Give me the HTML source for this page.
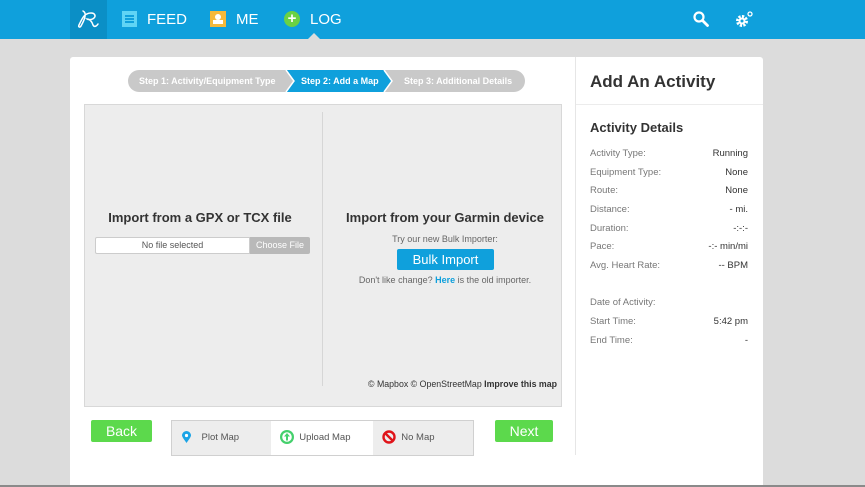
<!DOCTYPE html>
<html><head><meta charset="utf-8"><style>
*{margin:0;padding:0;box-sizing:border-box}
body{width:865px;height:487px;overflow:hidden;background:#dcdcdc;font-family:"Liberation Sans",sans-serif;position:relative}
.hdr{position:absolute;left:0;top:0;width:865px;height:39px;background:#0fa0dc}
.logo{position:absolute;left:70px;top:0;width:37px;height:39px;background:#0b8fc6}
.nav{position:absolute;top:11px;color:#fff;font-size:15px;line-height:18px}
.abs{position:absolute}
.panel{position:absolute;left:70px;top:57px;width:693px;height:428px;background:#fff;border-radius:3px 3px 0 0}
.map{position:absolute;left:84px;top:104px;width:478px;height:303px;background:#ededed;border:1px solid #d8d8d8}
.h{font-weight:bold;color:#333;font-size:13px;position:absolute;text-align:center}
.row{position:absolute;left:590px;width:158px;font-size:9.5px;color:#777}
.row span{position:absolute;right:0;color:#333}
.btn{position:absolute;background:#5cd94c;color:#fff;font-size:14px;text-align:center;border-radius:2px;line-height:22px}
.seg{position:absolute;top:420px;height:36px;font-size:9.5px;color:#555;line-height:36px}
</style></head><body>
<div class="hdr"></div>
<div class="logo"><svg width="37" height="39" viewBox="0 0 37 39"><path d="M13 11c4 2 2 8-2 15-1 2-3 1-2-1 3-6 5-12 12-12 4 0 5 3 3 5-2 2-6 2-7 1 3 0 5 3 6 6 1 2 3 2 5-1" fill="none" stroke="#fff" stroke-width="1.5" stroke-linecap="round"/></svg></div>
<div class="abs" style="left:122px;top:11px;width:15px;height:16px;background:#5fd4f5"></div>
<div class="abs" style="left:125px;top:15px;width:9px;height:1.5px;background:#0fa0dc;box-shadow:0 3px 0 #0fa0dc,0 6px 0 #0fa0dc"></div>
<div class="nav" style="left:147px">FEED</div>
<div class="abs" style="left:210px;top:11px;width:16px;height:16px;background:#f5b93a"></div>
<div class="abs" style="left:215px;top:14px;width:6px;height:6px;background:#fff;border-radius:3px"></div>
<div class="abs" style="left:213px;top:20px;width:10px;height:4px;background:#fff"></div>
<div class="nav" style="left:236px">ME</div>
<div class="abs" style="left:284px;top:11px;width:16px;height:16px;background:#6ad144;border-radius:50%;color:#fff;font-size:15px;line-height:16px;text-align:center;font-weight:bold">+</div>
<div class="nav" style="left:310px">LOG</div>
<div class="abs" style="left:308px;top:33px;width:0;height:0;border-left:6px solid transparent;border-right:6px solid transparent;border-bottom:6px solid #dcdcdc"></div>
<svg class="abs" style="left:692px;top:10px" width="18" height="18" viewBox="0 0 18 18"><circle cx="7" cy="7" r="4.5" fill="none" stroke="#fff" stroke-width="2.2"/><path d="M10.5 10.5l5 5" stroke="#fff" stroke-width="2.8" stroke-linecap="round"/></svg>
<svg class="abs" style="left:735px;top:10px" width="20" height="20" viewBox="0 0 20 20"><circle cx="7" cy="11" r="4.5" fill="none" stroke="#fff" stroke-width="3" stroke-dasharray="2.2 1.3"/><circle cx="7" cy="11" r="3.5" fill="#fff"/><circle cx="7" cy="11" r="1.5" fill="#0fa0dc"/><circle cx="15" cy="4" r="2" fill="none" stroke="#fff" stroke-width="1.3"/></svg>

<div class="panel"></div>
<div class="abs" style="left:575px;top:57px;width:1px;height:398px;background:#e6e6e6"></div>
<div class="abs" style="left:576px;top:104px;width:187px;height:1px;background:#ececec"></div>
<div class="abs" style="left:590px;top:72px;font-size:17px;font-weight:bold;color:#333">Add An Activity</div>
<div class="abs" style="left:590px;top:120px;font-size:13px;font-weight:bold;color:#333">Activity Details</div>
<div class="row" style="top:148px">Activity Type:<span>Running</span></div>
<div class="row" style="top:167px">Equipment Type:<span>None</span></div>
<div class="row" style="top:185px">Route:<span>None</span></div>
<div class="row" style="top:204px">Distance:<span>- mi.</span></div>
<div class="row" style="top:223px">Duration:<span>-:-:-</span></div>
<div class="row" style="top:241px">Pace:<span>-:- min/mi</span></div>
<div class="row" style="top:260px">Avg. Heart Rate:<span>-- BPM</span></div>
<div class="row" style="top:297px">Date of Activity:</div>
<div class="row" style="top:316px">Start Time:<span>5:42 pm</span></div>
<div class="row" style="top:335px">End Time:<span>-</span></div>

<svg class="abs" style="left:128px;top:70px" width="397" height="22" viewBox="0 0 397 22"><rect x="0" y="0" width="397" height="22" rx="11" fill="#c9c9c9"/><path d="M158 0h98l8 11-8 11h-98l8-11z" fill="#0fa0dc"/><path d="M158 0l8 11-8 11" fill="none" stroke="#fff" stroke-width="1.5"/><path d="M256 0l8 11-8 11" fill="none" stroke="#fff" stroke-width="1.5"/></svg>
<div class="abs" style="left:139px;top:76px;font-size:9px;font-weight:bold;color:#fff">Step 1: Activity/Equipment Type</div>
<div class="abs" style="left:301px;top:76px;font-size:9px;font-weight:bold;color:#fff">Step 2: Add a Map</div>
<div class="abs" style="left:404px;top:76px;font-size:9px;font-weight:bold;color:#fff">Step 3: Additional Details</div>

<div class="map"></div>
<div class="abs" style="left:322px;top:112px;width:1px;height:274px;background:#d6d6d6"></div>
<div class="h" style="left:84px;top:210px;width:232px">Import from a GPX or TCX file</div>
<div class="abs" style="left:95px;top:237px;width:155px;height:17px;background:#fff;border:1px solid #ccc;border-radius:2px 0 0 2px;font-size:9px;color:#555;text-align:center;line-height:15px">No file selected</div>
<div class="abs" style="left:250px;top:237px;width:60px;height:17px;background:#b9b9b9;font-size:9px;color:#fff;text-align:center;line-height:17px;border-radius:0 2px 2px 0">Choose File</div>
<div class="h" style="left:330px;top:210px;width:230px">Import from your Garmin device</div>
<div class="abs" style="left:330px;top:234px;width:230px;text-align:center;font-size:9px;color:#666">Try our new Bulk Importer:</div>
<div class="abs" style="left:397px;top:249px;width:97px;height:21px;background:#0fa0dc;color:#fff;font-size:13px;text-align:center;line-height:21px;border-radius:2px">Bulk Import</div>
<div class="abs" style="left:330px;top:275px;width:230px;text-align:center;font-size:9px;color:#666">Don't like change? <b style="color:#0fa0dc">Here</b> is the old importer.</div>
<div class="abs" style="left:300px;width:257px;top:379px;font-size:8.8px;color:#333;white-space:nowrap;text-align:right">© Mapbox © OpenStreetMap <b>Improve this map</b></div>

<div class="btn" style="left:91px;top:420px;width:61px">Back</div>
<div class="btn" style="left:495px;top:420px;width:58px">Next</div>
<div class="abs" style="left:171px;top:420px;width:303px;height:36px;border:1px solid #d0d0d0;background:#ededed"></div>
<div class="abs" style="left:271px;top:421px;width:102px;height:34px;background:#fff"></div>
<div class="seg" style="left:182px"><svg width="9" height="12" viewBox="0 0 9 12" style="vertical-align:middle"><path d="M4.5 12C1 7 0 5.5 0 4.5a4.5 4.5 0 019 0C9 5.5 8 7 4.5 12z" fill="#1ba4e6"/><circle cx="4.5" cy="4.5" r="1.6" fill="#fff"/></svg>&nbsp;&nbsp;&nbsp;&nbsp;Plot Map</div>
<div class="seg" style="left:280px"><svg width="14" height="14" viewBox="0 0 14 14" style="vertical-align:middle"><circle cx="7" cy="7" r="7" fill="#44d06c"/><circle cx="7" cy="7" r="4.8" fill="#fff"/><path d="M7 3l3 3.5H8v4H6v-4H4z" fill="#44d06c"/></svg>&nbsp;&nbsp;Upload Map</div>
<div class="seg" style="left:382px"><svg width="14" height="14" viewBox="0 0 14 14" style="vertical-align:middle"><circle cx="7" cy="7" r="5.5" fill="none" stroke="#e0141a" stroke-width="2.4"/><path d="M3 3l8 8" stroke="#e0141a" stroke-width="2.4"/></svg>&nbsp;&nbsp;No Map</div>
<div class="abs" style="left:0;top:485px;width:865px;height:2px;background:#8a8a8a"></div>
</body></html>
